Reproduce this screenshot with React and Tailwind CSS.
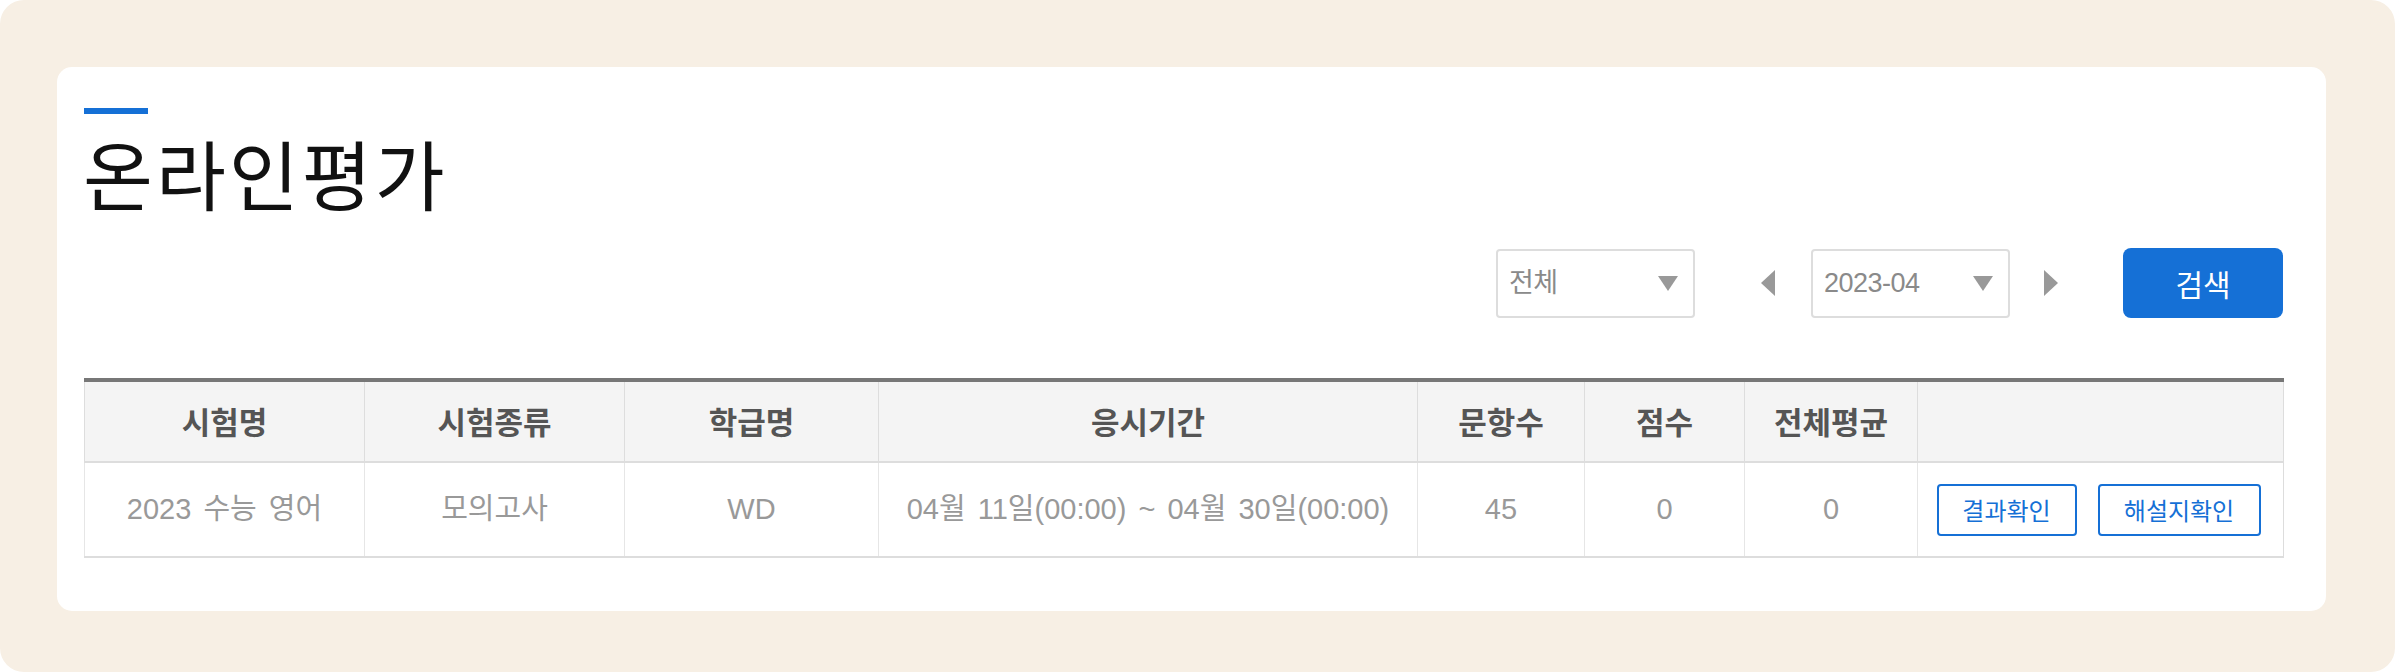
import React from 'react';

const font = { fontFamily: '"Noto Sans CJK KR", "Noto Sans", sans-serif' };
const cellFont = { fontFamily: '"Liberation Sans", "Noto Sans CJK KR", sans-serif' };

const columns = [
  { label: '시험명', width: 280 },
  { label: '시험종류', width: 260 },
  { label: '학급명', width: 254 },
  { label: '응시기간', width: 539 },
  { label: '문항수', width: 167 },
  { label: '점수', width: 160 },
  { label: '전체평균', width: 173 },
  { label: '', width: 366 },
];

const rows = [
  {
    name: '2023 수능 영어',
    type: '모의고사',
    klass: 'WD',
    period: '04월 11일(00:00) ~ 04월 30일(00:00)',
    count: 45,
    score: 0,
    avg: 0,
  },
];

function Triangle({ dir = 'down', className }) {
  const points = {
    down: '0,0 20,0 10,15',
    left: '14,0 14,26 0,13',
    right: '0,0 14,13 0,26',
  }[dir];
  const size = dir === 'down' ? { w: 20, h: 15 } : { w: 14, h: 26 };
  return (
    <svg width={size.w} height={size.h} viewBox={`0 0 ${size.w} ${size.h}`} className={className}>
      <polygon points={points} fill="#999999" />
    </svg>
  );
}

function Select({ value }) {
  return (
    <div className="w-[199px] h-[69px] border-2 border-[#dddddd] rounded-[4px] bg-white flex items-center justify-between pl-[11px] pr-[15px]">
      <span className="text-[27px] text-[#8a8a8a] tracking-[-0.5px]" style={cellFont}>{value}</span>
      <Triangle dir="down" />
    </div>
  );
}

export default function App() {
  return (
    <div className="w-full h-[672px] bg-[#f7efe4] rounded-[24px] pl-[57px] pr-[69px] pt-[67px] pb-[61px]" style={font}>
      <div className="h-full bg-white rounded-[15px] pl-[27px] pr-[43px] pt-[41px]">
        <div className="w-[64px] h-[6px] bg-[#1570d6]" />
        <h1 className="mt-[18px] h-[80px] text-[76px] leading-[80px] text-[#111111] font-normal tracking-[3px] ml-[-1px]">온라인평가</h1>

        <div className="mt-[36px] flex items-center justify-end">
          <Select value="전체" />
          <div className="ml-[66px] mr-[36px]">
            <Triangle dir="left" />
          </div>
          <Select value="2023-04" />
          <div className="ml-[34px] mr-[65px]">
            <Triangle dir="right" />
          </div>
          <button className="w-[160px] h-[70px] bg-[#1570d6] rounded-[8px] text-white text-[30px]">검색</button>
        </div>

        <table className="mt-[60px] w-[2199px] table-fixed border-collapse border-t-4 border-t-[#777777]">
          <colgroup>
            {columns.map((c, i) => (
              <col key={i} style={{ width: c.width }} />
            ))}
          </colgroup>
          <thead>
            <tr className="h-[82px] bg-[#f4f4f4] border-b-2 border-b-[#dddddd]">
              {columns.map((c, i) => (
                <th key={i} className="border-x border-[#dddddd] text-[31px] font-bold text-[#555555]">
                  {c.label}
                </th>
              ))}
            </tr>
          </thead>
          <tbody>
            {rows.map((r, i) => (
              <tr key={i} className="h-[95px] border-b-2 border-b-[#dddddd] text-[29px] text-[#999999] text-center [word-spacing:4px]" style={cellFont}>
                <td className="border-x border-[#e6e6e6]">{r.name}</td>
                <td className="border-x border-[#e6e6e6]">{r.type}</td>
                <td className="border-x border-[#e6e6e6]">{r.klass}</td>
                <td className="border-x border-[#e6e6e6] whitespace-nowrap">{r.period}</td>
                <td className="border-x border-[#e6e6e6]">{r.count}</td>
                <td className="border-x border-[#e6e6e6]">{r.score}</td>
                <td className="border-x border-[#e6e6e6]">{r.avg}</td>
                <td className="border-x border-[#dddddd] [word-spacing:0px]" style={font}>
                  <div className="flex items-center justify-center gap-[21px] pr-[4px]">
                    <button className="w-[140px] h-[52px] border-2 border-[#1570d6] rounded-[4px] text-[24px] text-[#1570d6]">결과확인</button>
                    <button className="w-[163px] h-[52px] border-2 border-[#1570d6] rounded-[4px] text-[24px] text-[#1570d6]">해설지확인</button>
                  </div>
                </td>
              </tr>
            ))}
          </tbody>
        </table>
      </div>
    </div>
  );
}
